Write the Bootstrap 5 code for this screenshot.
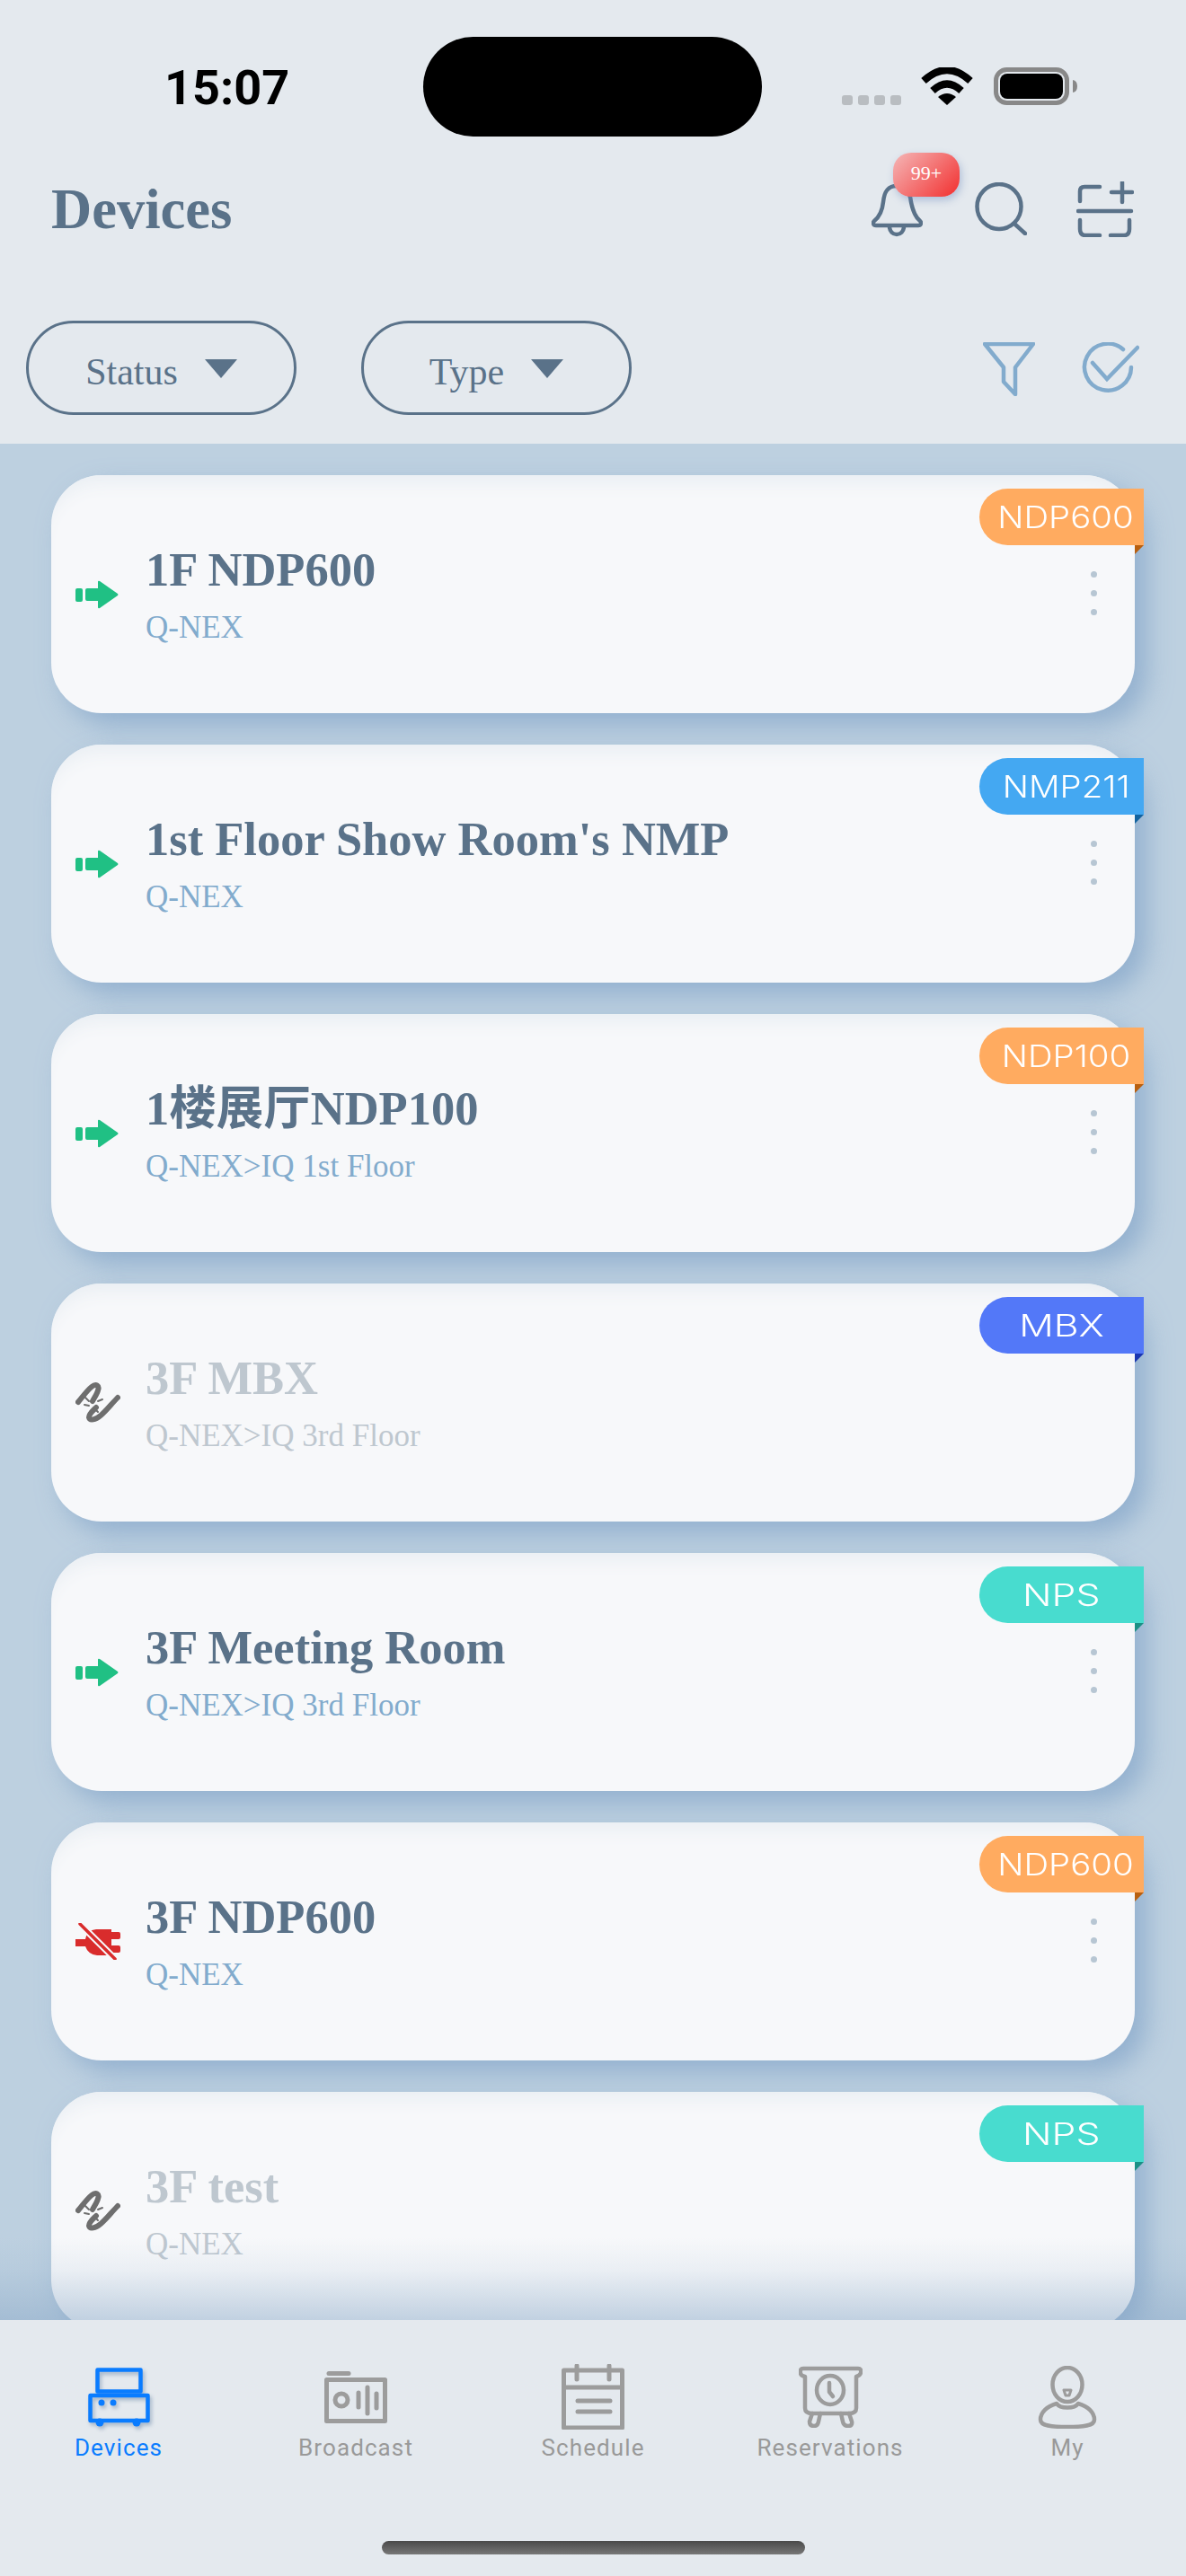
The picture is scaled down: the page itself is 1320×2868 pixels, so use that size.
<!DOCTYPE html>
<html lang="en">
<head>
  <meta charset="UTF-8" />
  <title>Devices</title>
  <link href="https://cdn.jsdelivr.net/npm/bootstrap@5.3.0/dist/css/bootstrap.min.css" rel="stylesheet" />
  <style>
    body { width: 1320px; height: 2868px; background: #e4e9ee; overflow: hidden; font-family: "Liberation Serif", "Noto Sans CJK SC", serif; color: #5a7289; }
    svg { display: block; flex: none; }

    /* status bar */
    .st-bar { height: 165px; padding: 41px 0 0 183px; }
    .st-time { width: 288px; margin-top: 30px; font: 700 54px/54px Roboto, sans-serif; color: #000; height: 54px; }
    .st-island { width: 377px; height: 111px; background: #000; border-radius: 56px; }
    .st-right { margin: 34px 0 0 89px; height: 42px; }
    .st-dots { gap: 6px; margin-right: 22px; }
    .st-dot { width: 12px; height: 11px; background: #b9bdc1; border-radius: 3px; }
    .st-wifi { margin-right: 23px; }

    /* title and filters */
    .top-row { height: 135px; padding: 0 58px 0 57px; }
    .top-title { font: 700 62.5px/70px "Liberation Serif", serif; margin: 0; color: #5a7289; }
    .bell-wrap { width: 57px; height: 64px; margin-right: 58px; }
    .bell-badge { position: absolute; left: 24px; top: -31px; width: 74px; height: 49px; border-radius: 20px; background: linear-gradient(135deg, #f5b7b7, #f22f2f); box-shadow: 2px 4px 8px rgba(110, 140, 190, .45); color: #fff; font-size: 22px; line-height: 46px; text-align: center; }
    .search-ico { margin-right: 55px; }
    .filter-row { height: 194px; padding: 57px 52px 0 29px; }
    .pick-btn { width: 301px; height: 105px; border: 3px solid #5a7289; border-radius: 53px; gap: 32px; margin-right: 72px; color: #5a7289; font-size: 42px; padding: 10px 0 0; background: transparent; }
    .pick-btn:hover { border-color: #5a7289; color: #5a7289; }
    .pick-arrow { width: 0; height: 0; border-left: 18px solid transparent; border-right: 18px solid transparent; border-top: 21px solid #5a7289; margin: -9px 0 0 -2px; }
    .funnel-ico { margin-right: 52px; }

    /* list */
    .dev-list { height: 2089px; padding: 35px 57px 0; gap: 35px; background: #bdd0e0; overflow: hidden; }
    .dev-card { flex: none; height: 265px; border: 0; border-radius: 56px; background: #f7f8fa; padding-left: 27px; box-shadow: 13px 13px 28px rgba(125, 160, 198, .65), inset 0 20px 20px -12px #e9eef3; }
    .dev-state { width: 78px; }
    .dev-name { font-size: 52.5px; font-weight: 700; line-height: 60px; color: #5a7289; }
    .dev-path { font-size: 35px; line-height: 40px; margin-top: 15px; color: #82abcd; }
    .is-off .dev-name, .is-off .dev-path { color: #bec7cf; }
    .dev-tag { position: absolute; top: 15px; right: -10px; width: 183px; height: 63px; border-radius: 32px 0 0 32px; color: #fff; font: 300 34px/63px Inter, sans-serif; text-align: center; padding-left: 10px; }
    .dev-tag span { display: inline-block; transform: scaleX(1.13); }
    .dev-tag::after { content: ""; position: absolute; right: 0; top: 100%; border-top: 10px solid var(--fold); border-right: 10px solid transparent; }
    .tag-short { padding-left: 0; }
    .tag-short span { transform: scaleX(1.26); }
    .tag-ndp { background: #ffab60; --fold: #b85f10; }
    .tag-nmp { background: #44a8f2; --fold: #14639f; }
    .tag-mbx { background: #5378f8; --fold: #1a36b0; }
    .tag-nps { background: #48dccf; --fold: #1b8f85; }
    .dev-more { position: absolute; right: 42px; top: 107px; gap: 14px; }
    .dev-more i { display: block; width: 7px; height: 7px; border-radius: 50%; background: #b7c6d3; }
    .list-fade { position: absolute; left: 0; right: 0; bottom: 0; height: 92px; background: linear-gradient(rgba(140, 170, 200, 0), rgba(140, 170, 200, .12) 40%, rgba(140, 170, 200, .5)); }

    /* tab bar */
    .tab-bar { height: 285px; padding-top: 49px; background: #e4e9ee; }
    .tab-ico { height: 73px; color: #9c9c9c; }
    .tab-text { margin-top: 5px; font: 400 26px/30px Roboto, sans-serif; letter-spacing: 1.1px; color: #999; }
    .tab-on .tab-ico { color: #0a7cff; }
    .tab-on .tab-text { color: #0a7cff; }
    .tab-on svg { filter: drop-shadow(2px 3px 2px rgba(40, 80, 130, .35)); }
    .home-bar { width: 471px; height: 15px; margin: 89px auto 0; border-radius: 8px; background: linear-gradient(#4a4a4a, #777); }
  </style>
</head>
<body>
  <svg width="0" height="0" class="position-absolute">
    <symbol id="ico-ok" viewBox="0 0 48 32">
      <rect x="0" y="9" width="8" height="15" rx="2" fill="#20c084" />
      <path d="M11 11q0-2 2-2h12V2q0-2 2-1l20 14q1 1 0 2L27 31q-2 1-2-1v-7H13q-2 0-2-2z" fill="#20c084" />
    </symbol>
    <symbol id="ico-lost" viewBox="0 0 50 45">
      <g fill="none" stroke="#6e6e6e" stroke-linecap="round" stroke-linejoin="round">
        <path stroke-width="6" d="M3 22C8 16 13 9 18 5C23 1 27 4 25 9C24 13 21 17 19 21" />
        <path stroke-width="6" d="M47 17C40 24 35 31 28 37C22 42 16 43 15 39C15 35 20 31 23 28" />
        <path stroke-width="2" d="M11 17l4 4M10 25l5 1M25 21l5-2M22 30l3 3" />
      </g>
    </symbol>
    <symbol id="ico-unplug" viewBox="0 0 50 41">
      <path fill="#d92c2c" d="M0 18h11q2-10 12-11h17v3h8q2 0 2 2v4q0 2-2 2h-8v7h8q2 0 2 2v4q0 2-2 2h-8v3H24Q14 35 11 26H0z" />
      <path stroke="#f7f8fa" stroke-width="7.500" d="M3 -1L46 42" />
      <path stroke="#d92c2c" stroke-width="3.500" stroke-linecap="round" d="M5 1L44 40" />
    </symbol>
  </svg>

  <header>
    <div class="st-bar d-flex align-items-start">
      <div class="st-time">15:07</div>
      <div class="st-island"></div>
      <div class="st-right d-flex align-items-end">
        <div class="st-dots d-flex">
          <span class="st-dot"></span><span class="st-dot"></span><span class="st-dot"></span><span class="st-dot"></span>
        </div>
        <svg width="58" height="42" viewBox="0 0 58 42" class="st-wifi">
          <path d="M3 15Q29 -9 55 15" fill="none" stroke="#000" stroke-width="8" />
          <path d="M13 26Q29 11 45 26" fill="none" stroke="#000" stroke-width="8" />
          <path d="M19 33Q29 25 39 33L29 42Z" />
        </svg>
        <svg width="94" height="42" viewBox="0 0 94 42">
          <rect x="2.500" y="2.500" width="79" height="37" rx="12" fill="none" stroke="#888" stroke-width="5" />
          <rect x="7" y="7" width="70" height="28" rx="8" />
          <path d="M88 14q5 1 5 7t-5 7z" fill="#888" />
        </svg>
      </div>
    </div>

    <div class="top-row d-flex align-items-center justify-content-between">
      <h1 class="top-title">Devices</h1>
      <div class="d-flex align-items-center">
        <div class="bell-wrap position-relative">
          <svg width="57" height="64" viewBox="0 0 57 64" fill="none" stroke="#5a7289" stroke-width="4.500">
            <path d="M28 6C17 6 14 14 13 24C12 34 8 41 3 45C1 47 2 50 5 50H52C55 50 56 47 54 45C49 41 46 34 44 24C43 14 39 6 28 6Z" />
            <path d="M20 51C20 63 36 63 36 51" />
          </svg>
          <span class="bell-badge">99+</span>
        </div>
        <svg width="58" height="59" viewBox="0 0 58 59" fill="none" stroke="#5a7289" stroke-width="4.500" stroke-linecap="round" class="search-ico">
          <ellipse cx="27" cy="27" rx="24.500" ry="25" />
          <path d="M45 47L56 57" />
        </svg>
        <svg width="64" height="62" viewBox="0 0 64 62" fill="none" stroke="#5a7289" stroke-width="4.500" stroke-linecap="round">
          <path d="M4 22V11Q4 6 9 6H26M39 12H62M51 1V23M2 33H61M4 43V53Q4 60 10 60H26M38 60H53Q59 60 59 53V43" />
        </svg>
      </div>
    </div>

    <div class="filter-row d-flex align-items-start">
      <button type="button" class="pick-btn btn d-flex align-items-center justify-content-center">Status <span class="pick-arrow"></span></button>
      <button type="button" class="pick-btn btn d-flex align-items-center justify-content-center">Type <span class="pick-arrow"></span></button>
      <svg width="58" height="60" viewBox="0 0 58 60" fill="none" stroke="#82abcd" stroke-width="4.500" stroke-linejoin="round" class="funnel-ico ms-auto mt-4">
        <path d="M2 2H56L36 28V58L23 44V28Z" />
      </svg>
      <svg width="64" height="58" viewBox="0 0 64 58" fill="none" stroke="#82abcd" stroke-width="4.500" stroke-linecap="round" class="mt-4">
        <path d="M46 8A26 26 0 1 0 55 28" />
        <path d="M12 23L28 41L62 6" />
      </svg>
    </div>
  </header>

  <main class="dev-list d-flex flex-column position-relative">
    <div class="dev-card card flex-row align-items-center position-relative">
      <div class="dev-state"><svg width="48" height="32"><use href="#ico-ok" /></svg></div>
      <div><div class="dev-name">1F NDP600</div><div class="dev-path">Q-NEX</div></div>
      <div class="dev-tag tag-ndp"><span>NDP600</span></div>
      <div class="dev-more d-flex flex-column"><i></i><i></i><i></i></div>
    </div>
    <div class="dev-card card flex-row align-items-center position-relative">
      <div class="dev-state"><svg width="48" height="32"><use href="#ico-ok" /></svg></div>
      <div><div class="dev-name">1st Floor Show Room's NMP</div><div class="dev-path">Q-NEX</div></div>
      <div class="dev-tag tag-nmp"><span>NMP211</span></div>
      <div class="dev-more d-flex flex-column"><i></i><i></i><i></i></div>
    </div>
    <div class="dev-card card flex-row align-items-center position-relative">
      <div class="dev-state"><svg width="48" height="32"><use href="#ico-ok" /></svg></div>
      <div><div class="dev-name">1楼展厅NDP100</div><div class="dev-path">Q-NEX&gt;IQ 1st Floor</div></div>
      <div class="dev-tag tag-ndp"><span>NDP100</span></div>
      <div class="dev-more d-flex flex-column"><i></i><i></i><i></i></div>
    </div>
    <div class="dev-card card is-off flex-row align-items-center position-relative">
      <div class="dev-state"><svg width="50" height="45"><use href="#ico-lost" /></svg></div>
      <div><div class="dev-name">3F MBX</div><div class="dev-path">Q-NEX&gt;IQ 3rd Floor</div></div>
      <div class="dev-tag tag-short tag-mbx"><span>MBX</span></div>
    </div>
    <div class="dev-card card flex-row align-items-center position-relative">
      <div class="dev-state"><svg width="48" height="32"><use href="#ico-ok" /></svg></div>
      <div><div class="dev-name">3F Meeting Room</div><div class="dev-path">Q-NEX&gt;IQ 3rd Floor</div></div>
      <div class="dev-tag tag-short tag-nps"><span>NPS</span></div>
      <div class="dev-more d-flex flex-column"><i></i><i></i><i></i></div>
    </div>
    <div class="dev-card card flex-row align-items-center position-relative">
      <div class="dev-state"><svg width="50" height="41"><use href="#ico-unplug" /></svg></div>
      <div><div class="dev-name">3F NDP600</div><div class="dev-path">Q-NEX</div></div>
      <div class="dev-tag tag-ndp"><span>NDP600</span></div>
      <div class="dev-more d-flex flex-column"><i></i><i></i><i></i></div>
    </div>
    <div class="dev-card card is-off flex-row align-items-center position-relative">
      <div class="dev-state"><svg width="50" height="45"><use href="#ico-lost" /></svg></div>
      <div><div class="dev-name">3F test</div><div class="dev-path">Q-NEX</div></div>
      <div class="dev-tag tag-short tag-nps"><span>NPS</span></div>
    </div>
    <div class="list-fade"></div>
  </main>

  <footer class="tab-bar">
    <div class="row g-0 text-center">
      <div class="col tab-on">
        <div class="tab-ico d-flex justify-content-center align-items-center">
          <svg width="69" height="66" viewBox="0 0 69 66" fill="none" stroke="currentColor" stroke-width="4.500" stroke-linejoin="round">
            <rect x="10.500" y="2.500" width="48" height="24" />
            <rect x="2.500" y="31" width="64" height="28" />
            <g fill="currentColor" stroke="none">
              <circle cx="15" cy="39" r="3.500" /><circle cx="28" cy="39" r="3.500" />
              <circle cx="13" cy="61" r="4.500" /><circle cx="54" cy="61" r="4.500" />
            </g>
          </svg>
        </div>
        <div class="tab-text">Devices</div>
      </div>
      <div class="col">
        <div class="tab-ico d-flex justify-content-center align-items-center">
          <svg width="70" height="58" viewBox="0 0 70 58" fill="none" stroke="currentColor" stroke-width="5" stroke-linecap="round" stroke-linejoin="round">
            <path d="M5 2.500H27" />
            <rect x="2.500" y="9.500" width="65" height="46" />
            <circle cx="19" cy="32" r="7" />
            <path d="M38 24V40M48 18V47M58 25V41" />
          </svg>
        </div>
        <div class="tab-text">Broadcast</div>
      </div>
      <div class="col">
        <div class="tab-ico d-flex justify-content-center align-items-center">
          <svg width="70" height="73" viewBox="0 0 70 73" fill="none" stroke="currentColor" stroke-width="5" stroke-linecap="round" stroke-linejoin="round">
            <rect x="2.500" y="7" width="65" height="64" />
            <path d="M17 2V17M53 2V17M3 26H67M18 41H54M18 53H54" />
          </svg>
        </div>
        <div class="tab-text">Schedule</div>
      </div>
      <div class="col">
        <div class="tab-ico d-flex justify-content-center align-items-center">
          <svg width="71" height="69" viewBox="0 0 71 69" fill="none" stroke="currentColor" stroke-width="4.500" stroke-linecap="round" stroke-linejoin="round">
            <path d="M5 3H66Q70 3 69 8Q68 11 64 12V47Q64 53 56 53H15Q7 53 7 47V12Q2 11 2 8Q1 3 5 3Z" />
            <path d="M15 53L12 62Q12 67 17 67Q21 67 22 62L24 53M47 53L49 62Q50 67 55 67Q60 67 59 62L56 53" />
            <ellipse cx="35" cy="27" rx="15" ry="16" />
            <path d="M34 19V29L38 34" />
          </svg>
        </div>
        <div class="tab-text">Reservations</div>
      </div>
      <div class="col">
        <div class="tab-ico d-flex justify-content-center align-items-center">
          <svg width="66" height="70" viewBox="0 0 66 70" fill="none" stroke="currentColor" stroke-width="4.500" stroke-linecap="round" stroke-linejoin="round">
            <ellipse cx="33" cy="21" rx="16.500" ry="19" />
            <path d="M29 27H37L35 33H31Z" stroke-width="3" />
            <path d="M21 42C10 45 3 52 3 60C3 67 15 68 33 68C51 68 63 67 63 60C63 52 56 45 45 42C41 48 25 48 21 42Z" />
          </svg>
        </div>
        <div class="tab-text">My</div>
      </div>
    </div>
    <div class="home-bar"></div>
  </footer>
</body>
</html>
